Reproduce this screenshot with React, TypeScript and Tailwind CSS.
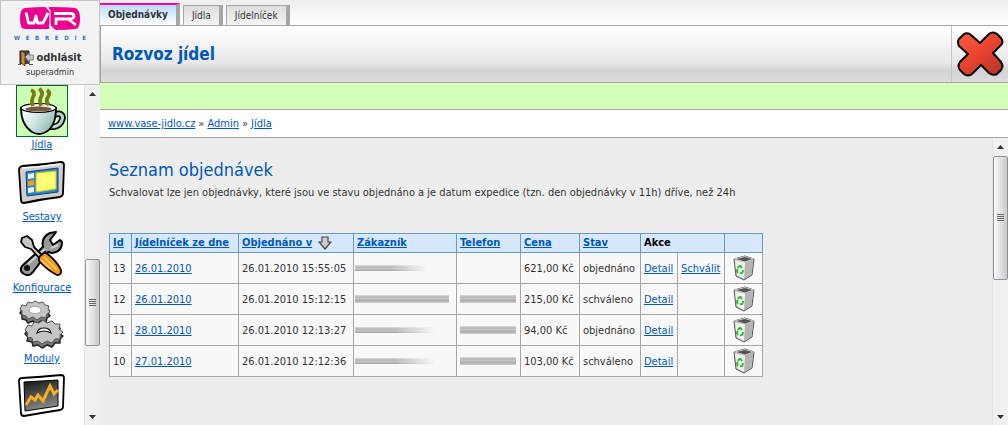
import { useState } from 'react'
import type { ReactNode } from 'react'
import clsx from 'clsx'

interface Order {
  id: number
  menuDate: string
  orderedAt: string
  customerBar: string
  phoneBar: string
  price: string
  status: string
  canApprove?: boolean
}

const barFill = 'block bg-[linear-gradient(to_bottom,#dedede_0px,#b4b4b4_2px,#cccccc_4px,#a4a4a4_5px,#d0d0d0_8px)]'
const fadeMask = 'mask-[linear-gradient(to_right,black_50%,transparent)]'

const orders: Order[] = [
  { id: 13, menuDate: '26.01.2010', orderedAt: '26.01.2010 15:55:05', customerBar: `w-18 h-1.5 ${fadeMask}`, phoneBar: 'w-0 h-2', price: '621,00 Kč', status: 'objednáno', canApprove: true },
  { id: 12, menuDate: '26.01.2010', orderedAt: '26.01.2010 15:12:15', customerBar: 'w-full h-2', phoneBar: 'w-full h-2', price: '215,00 Kč', status: 'schváleno' },
  { id: 11, menuDate: '28.01.2010', orderedAt: '26.01.2010 12:13:27', customerBar: `w-20 h-1.5 ${fadeMask}`, phoneBar: 'w-full h-2', price: '94,00 Kč', status: 'objednáno' },
  { id: 10, menuDate: '27.01.2010', orderedAt: '26.01.2010 12:12:36', customerBar: `w-20 h-1.5 ${fadeMask}`, phoneBar: 'w-full h-2', price: '103,00 Kč', status: 'schváleno' },
]

const tabs = ['Objednávky', 'Jídla', 'Jídelníček']

function Logo() {
  return (
    <svg width="60" height="25" viewBox="0 0 60 25" role="img" aria-label="WR">
      <path d="M5 1Q15 0 26 0L29 4V22H5Q0 22 0 12Q0 1 5 1Z" fill="#ec008c" />
      <path d="M29 0Q45 0 55 1Q60 2 60 12Q60 22 55 22Q45 23 36 23L33 21L29 16Z" fill="#ec008c" />
      <path d="M26 0L30 3.500V19L34 23" fill="none" stroke="#f2f2f2" strokeWidth="1.200" />
      <path d="M6 5.500L8.500 16H14L16 9L17.500 16H23L28 6" fill="none" stroke="#fff" strokeWidth="2.800" strokeLinejoin="round" />
      <path d="M36 18V12H49Q54 12 54 9Q54 6.500 50 6.500H34M48 12L56 18" fill="none" stroke="#fff" strokeWidth="2.800" />
    </svg>
  )
}

function DoorIcon() {
  return (
    <svg width="16" height="16" viewBox="0 0 16 16" aria-hidden="true">
      <path d="M2 14V1H11V14" fill="#444" stroke="#222" />
      <path d="M3 1L7 3V16L3 13Z" fill="#c88a3c" stroke="#4a2c08" strokeWidth=".8" />
      <path d="M0 14.500H3M11 14.500H15" stroke="#555" />
      <path d="M7 7L11 3V5H15.500V10H11V12Z" fill="#c4c4c4" stroke="#666" strokeWidth=".7" />
    </svg>
  )
}

function CupIcon() {
  return (
    <svg width="50" height="50" viewBox="0 0 50 50" aria-hidden="true">
      <defs>
        <linearGradient id="cup" x1="0" x2="1" y2=".5">
          <stop offset="0" stopColor="#fff" />
          <stop offset=".5" stopColor="#d3e8e5" />
          <stop offset="1" stopColor="#96b9b6" />
        </linearGradient>
      </defs>
      <path d="M37 29C43 26 47 29 45 34C43 40 37 42 31 40" fill="none" stroke="#000" strokeWidth="6.500" />
      <path d="M37 29C43 26 47 29 45 34C43 40 37 42 31 40" fill="none" stroke="#b8d2d0" strokeWidth="3" />
      <path d="M4 22C4 36 9 42 15 46Q22 50 29 46C36 42 39 34 39 22Z" fill="url(#cup)" stroke="#000" strokeWidth="1.800" />
      <ellipse cx="21.500" cy="22" rx="17.500" ry="4.500" fill="#eef8f6" stroke="#000" strokeWidth="1.200" />
      <ellipse cx="21.500" cy="23" rx="13" ry="2.500" fill="#79563d" />
      <path d="M14 4Q19 6 16 11Q14 15 16 20M22 3Q27 6 24 11Q22 15 24 20M30 4Q34 7 31 11Q28 15 32 19" fill="none" stroke="#7f7a10" strokeWidth="3.800" />
    </svg>
  )
}

function PanelIcon() {
  return (
    <svg width="50" height="46" viewBox="0 0 50 46" aria-hidden="true">
      <path d="M5 6Q24 5 44 2Q47 2 47 5L46 33Q46 36 43 37Q25 39 7 43Q4 43 4 40L2 10Q2 7 5 6Z" fill="#cecece" stroke="#000" strokeWidth="1.800" />
      <path d="M5 8Q24 7 44 4" fill="none" stroke="#f6f6f6" strokeWidth="1.500" />
      <path d="M9 12L41 8V32L10 36Z" fill="#2588d3" stroke="#123e70" />
      <path d="M19 13L39 11V29L19 32Z" fill="#ffff73" stroke="#d5bd16" />
      <path d="M11 14L17 13V18L11 19ZM11 28L17 27V32L11 33Z" fill="#f3f3f3" />
      <path d="M11 21L17 20V25L11 26Z" fill="#ff9c16" />
    </svg>
  )
}

function ToolsIcon() {
  return (
    <svg width="46" height="48" viewBox="0 0 46 48" aria-hidden="true">
      <path d="M3 36L24 17Q22 7 31 3L37 2L31 10L34 15L41 10L43 12Q43 22 33 23L29 22L14 42Q10 47 5 44Q0 41 3 36Z" fill="#999" stroke="#000" strokeWidth="2" strokeLinejoin="round" />
      <path d="M9 34L26 19M32 18L39 15" fill="none" stroke="#d0d0d0" strokeWidth="2" />
      <circle cx="8" cy="38" r="3" fill="#111" />
      <path d="M3 8L8 6L13 10L15 17L24 26L21 29L12 19L6 17L2 12Z" fill="#c6c6c6" stroke="#000" strokeWidth="1.800" strokeLinejoin="round" />
      <path d="M20 27L26 22Q38 31 42 40Q43 45 38 45Q28 40 20 31Z" fill="#f49b1b" stroke="#000" strokeWidth="1.800" />
      <path d="M25 27L38 40M22 30L32 39" stroke="#ffd177" strokeWidth="1.500" />
    </svg>
  )
}

function GearsIcon() {
  const small = 'M3 5L7 6L9 2L13 3L16 1L20 3L24 2L26 5L30 6L29 9L31 12L28 14L27 18L22 17L18 20L14 17L9 19L7 16L3 15L3 11L1 9Z'
  const big = 'M9 25L13 26L15 22L20 23L24 20L28 23L33 21L36 24L41 24L40 29L44 32L41 35L41 39L36 39L33 43L28 41L23 44L19 41L14 42L13 38L8 37L9 33L6 30Z'

  return (
    <svg width="46" height="50" viewBox="0 0 46 50" aria-hidden="true">
      <g stroke="#222" strokeWidth="1.500" strokeLinejoin="round">
        <path d={small} transform="translate(0 4)" fill="#777" />
        <path d={small} fill="#c4c4c4" stroke="#555" strokeWidth="1" />
        <ellipse cx="16" cy="10" rx="6" ry="3.500" fill="#fff" stroke="#999" strokeWidth=".8" />
        <path d={big} transform="translate(0 4)" fill="#777" />
        <path d={big} fill="#c4c4c4" stroke="#555" strokeWidth="1" />
      </g>
      <path d="M18 33Q19 28 25 28Q31 28 32 33Q25 29 18 33Z" fill="#fff" stroke="#111" strokeWidth="1.200" />
    </svg>
  )
}

function ChartIcon() {
  return (
    <svg width="50" height="46" viewBox="0 0 50 46" aria-hidden="true">
      <defs>
        <linearGradient id="screen" x1="0" y1="0" x2=".3" y2="1">
          <stop offset="0" stopColor="#111" />
          <stop offset="1" stopColor="#888" />
        </linearGradient>
      </defs>
      <path d="M5 5Q24 4 44 2Q47 2 47 5L46 34Q46 36 43 37Q24 40 7 43Q4 43 4 40L2 8Q2 5 5 5Z" fill="#fff" stroke="#000" strokeWidth="1.800" />
      <path d="M7 9L41 7V33L8 38Z" fill="url(#screen)" stroke="#000" />
      <path d="M9 32L14 24L18 27L21 22L26 28L33 13L37 21L41 17" fill="none" stroke="#f5ae20" strokeWidth="3" />
    </svg>
  )
}

function CloseIcon() {
  return (
    <svg width="48" height="46" viewBox="0 0 48 46" aria-hidden="true">
      <defs>
        <linearGradient id="cross" x1="0" y1="0" x2=".8" y2="1">
          <stop offset="0" stopColor="#ff5a40" />
          <stop offset=".45" stopColor="#ee4730" />
          <stop offset="1" stopColor="#bd3526" />
        </linearGradient>
      </defs>
      <path d="M8 3Q12 1 15 4L24 12L33 3Q37 0 41 3L45 7Q48 11 45 14L37 22L45 31Q48 35 45 39L41 43Q37 45 33 42L25 34L16 43Q12 46 8 43L4 39Q1 35 4 31L12 23L3 15Q1 11 3 8Z" fill="url(#cross)" stroke="#000" strokeWidth="2" />
    </svg>
  )
}

function TrashIcon() {
  return (
    <svg width="22" height="26" viewBox="0 0 22 26" aria-hidden="true">
      <path d="M1 4L12 1L21 4L19 20L11 25L3 21Z" fill="#c9c9c9" stroke="#555" />
      <path d="M12 7L20 5L18.500 19.500L11 24Z" fill="#b4b4b4" />
      <path d="M2 6L12 7L11 24L4 20Z" fill="#f0f0f0" />
      <path d="M1.500 4L12 1.500L20.500 4L12 7Z" fill="#555" stroke="#c4c4c4" strokeWidth="1" />
      <path d="M5 13Q7 9 9 13M10 15Q10 19 7 18M5 18Q3 16 5 14" fill="none" stroke="#20c020" strokeWidth="1.800" />
    </svg>
  )
}

function SortArrow() {
  return (
    <svg width="14" height="14" viewBox="0 0 14 14" className="inline-block" aria-hidden="true">
      <path d="M4 1H10V6H13L7 13L1 6H4Z" fill="#d0cdc9" stroke="#444" strokeWidth="1.200" />
    </svg>
  )
}

function Arrow({ up }: { up?: boolean }) {
  return (
    <span className="flex h-[17px] shrink-0 items-center justify-center">
      <svg width="7" height="4" viewBox="0 0 7 4" aria-hidden="true">
        <path d={up ? 'M0 4L3.500 0L7 4Z' : 'M0 0H7L3.500 4Z'} fill="#333" />
      </svg>
    </span>
  )
}

function Scrollbar({ before, thumb, after }: { before: string; thumb: string; after: string }) {
  return (
    <div className="flex w-4 shrink-0 flex-col border-l border-[#e4e4e4] bg-[#f0f0f0]" aria-hidden="true">
      <Arrow up />
      <div className={before} />
      <div className={clsx('flex flex-col items-center justify-center gap-px rounded-xs border border-[#929292] bg-linear-to-r from-[#fafafa] via-[#e2e2e5] to-[#c9c9ce]', thumb)}>
        <span className="h-px w-[7px] bg-[#666]" />
        <span className="h-px w-[7px] bg-[#666]" />
        <span className="h-px w-[7px] bg-[#666]" />
        <span className="h-px w-[7px] bg-[#666]" />
      </div>
      <div className={after} />
      <Arrow />
    </div>
  )
}

function Link({ children, className }: { children: ReactNode; className?: string }) {
  return (
    <a href="#" className={clsx('text-[#0058bb] underline', className)}>
      {children}
    </a>
  )
}

const modules = [
  { name: 'Jídla', icon: <CupIcon />, active: true },
  { name: 'Sestavy', icon: <PanelIcon /> },
  { name: 'Konfigurace', icon: <ToolsIcon /> },
  { name: 'Moduly', icon: <GearsIcon /> },
  { name: '', icon: <ChartIcon /> },
]

function Sidebar() {
  return (
    <aside className="flex w-[100px] shrink-0 flex-col">
      <div className="flex h-[85px] shrink-0 flex-col items-center border border-[#c4c4c4] bg-[#f2f2f2] pt-1.5">
        <Logo />
        <div className="mt-0.5 flex w-[72px] justify-between text-[6px] leading-[8px] font-bold text-[#2878c8]">
          {'WEBREDIE'.split('').map((letter, i) => (
            <span key={i}>{letter}</span>
          ))}
        </div>
        <a href="#" className="mt-2 flex items-center gap-0.5 text-[11px] leading-4 font-bold text-[#333]">
          <DoorIcon />
          odhlásit
        </a>
        <span className="text-[9px] leading-3">superadmin</span>
      </div>
      <div className="flex min-h-0 flex-1 bg-white">
        <nav className="flex flex-1 flex-col items-center overflow-hidden">
          {modules.map((m, i) => (
            <a key={i} href="#" aria-label={m.name || undefined} className="flex h-[71px] shrink-0 flex-col items-center leading-4 text-[#0058bb] underline first:h-[72px]">
              <span className={clsx('flex h-[52px] w-[52px] shrink-0 items-center justify-center', m.active && 'border border-[#006633] bg-[#ccffb3]')}>
                {m.icon}
              </span>
              {m.name}
            </a>
          ))}
        </nav>
        <Scrollbar before="flex-158" thumb="flex-86" after="flex-62" />
      </div>
    </aside>
  )
}

function OrdersTable() {
  const th = 'border border-[#6699cc] px-[3px] text-left font-bold'
  const td = 'border border-[#a5a5a5] px-[3px] pt-0.5'
  const iconTd = 'border border-[#a5a5a5] px-[3px]'

  return (
    <table className="mt-[33px] table-fixed border-collapse">
      <colgroup>
        <col className="w-[22px]" />
        <col className="w-[107px]" />
        <col className="w-[115px]" />
        <col className="w-[103px]" />
        <col className="w-16" />
        <col className="w-[59px]" />
        <col className="w-[61px]" />
        <col className="w-[37px]" />
        <col className="w-[47px]" />
        <col className="w-[38px]" />
      </colgroup>
      <thead>
        <tr className="h-[19px] bg-[#d5e8ff] whitespace-nowrap">
          <th className={th}><Link>Id</Link></th>
          <th className={th}><Link>Jídelníček ze dne</Link></th>
          <th className={th}>
            <span className="flex items-center gap-1.5"><Link>Objednáno v</Link><SortArrow /></span>
          </th>
          <th className={th}><Link>Zákazník</Link></th>
          <th className={th}><Link>Telefon</Link></th>
          <th className={th}><Link>Cena</Link></th>
          <th className={th}><Link>Stav</Link></th>
          <th className={clsx(th, 'text-black')} colSpan={2}>Akce</th>
          <th className={th} />
        </tr>
      </thead>
      <tbody className="bg-[#f8f8f8] whitespace-nowrap">
        {orders.map((o) => (
          <tr key={o.id} className="h-[31px]">
            <td className={td}>{o.id}</td>
            <td className={td}><Link>{o.menuDate}</Link></td>
            <td className={td}>{o.orderedAt}</td>
            <td className="border border-[#a5a5a5] pr-[7px] pl-px"><span className={clsx(barFill, o.customerBar)} /></td>
            <td className="border border-[#a5a5a5] pr-1 pl-[3px]"><span className={clsx(barFill, o.phoneBar)} /></td>
            <td className={td}>{o.price}</td>
            <td className={td}>{o.status}</td>
            <td className={td}><Link>Detail</Link></td>
            <td className={td}>{o.canApprove && <Link>Schválit</Link>}</td>
            <td className={iconTd}>
              <button type="button" aria-label="Smazat" className="mx-auto block">
                <TrashIcon />
              </button>
            </td>
          </tr>
        ))}
      </tbody>
    </table>
  )
}

export default function App() {
  const [activeTab, setActiveTab] = useState('Objednávky')

  return (
    <div className="flex h-screen overflow-hidden bg-[#ededed] font-['DejaVu_Sans_Condensed','DejaVu_Sans',sans-serif] text-[11px] leading-[14px] text-[#333]">
      <Sidebar />
      <main className="flex min-w-0 flex-1 flex-col">
        <div className="flex h-[26px] shrink-0 items-end gap-[3px] border-b border-[#a5a5a5] bg-linear-to-b from-[#eeeeee] to-white">
          {tabs.map((tab) => (
            <button
              key={tab}
              type="button"
              onClick={() => setActiveTab(tab)}
              className={clsx(
                'border-r-4 border-r-[#a5a5a5] px-2 text-[10px]',
                tab === activeTab
                  ? 'h-[22px] border-t-2 border-t-[#ff0099] bg-linear-to-b from-[#b8dcff] to-white font-bold'
                  : 'h-5 border-t border-l border-t-[#a5a5a5] border-l-[#a5a5a5] bg-linear-to-b from-[#dddddd] to-[#f4f4f4]'
              )}
            >
              {tab}
            </button>
          ))}
        </div>
        <header className="flex h-[57px] shrink-0 border-b border-[#a5a5a5] bg-[linear-gradient(to_bottom,#ffffff,#e8e8e8_65%,#d2d2d2_80%,#dddddd)]">
          <h1 className="flex flex-1 items-center border-l border-[#a5a5a5] pl-[11px] text-[17px] leading-5 font-bold text-[#0058bb]">Rozvoz jídel</h1>
          <button type="button" aria-label="Zavřít" className="flex w-[57px] items-center justify-center border-l border-[#c4c4c4]">
            <CloseIcon />
          </button>
        </header>
        <div className="h-[27px] shrink-0 border-b border-[#a5a5a5] bg-[#d4ffb8]" />
        <nav className="flex h-7 shrink-0 items-center gap-[3px] border-b border-[#a5a5a5] bg-white px-2 pt-px">
          <Link>www.vase-jidlo.cz</Link>
          <span>»</span>
          <Link>Admin</Link>
          <span>»</span>
          <Link>Jídla</Link>
        </nav>
        <div className="flex min-h-0 flex-1">
          <section className="min-w-0 flex-1 overflow-hidden px-[9px] pt-[22px]">
            <h2 className="text-[18px] leading-5 text-[#0058bb]">Seznam objednávek</h2>
            <p className="mt-1.5">
              Schvalovat lze jen objednávky, které jsou ve stavu objednáno a je datum expedice (tzn. den objednávky v 11h) dříve, než 24h
            </p>
            <OrdersTable />
          </section>
          <Scrollbar before="flex-1" thumb="flex-123" after="flex-130" />
        </div>
      </main>
    </div>
  )
}
